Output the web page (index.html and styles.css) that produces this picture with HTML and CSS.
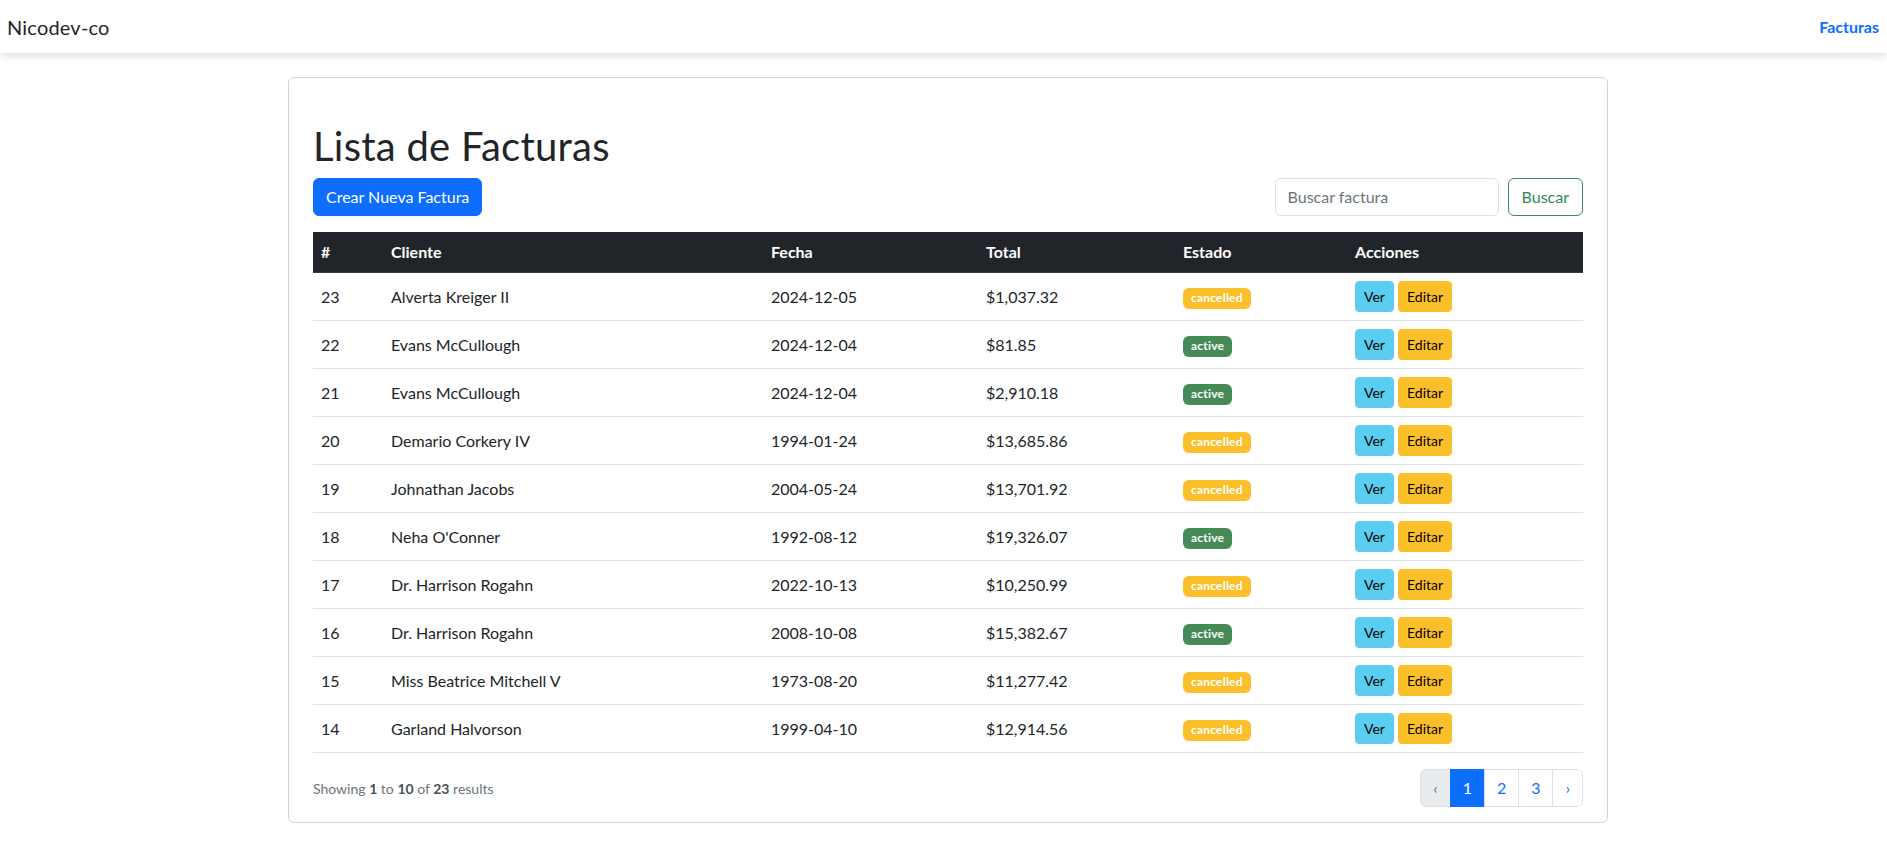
FILE: index.html
```html
<!DOCTYPE html>
<html lang="es">
<head>
<meta charset="utf-8">
<title>Lista de Facturas</title>
<link rel="stylesheet" href="styles.css">
</head>
<body>
<nav class="navbar">
  <a class="brand" href="#">Nicodev-co</a>
  <a class="nav-link" href="#">Facturas</a>
</nav>
<main class="wrap">
  <section class="card">
    <h1 class="title">Lista de Facturas</h1>
    <div class="toolbar">
      <a class="btn btn-primary" href="#">Crear Nueva Factura</a>
      <form class="search">
        <input class="search-input" type="text" placeholder="Buscar factura">
        <button class="btn btn-outline-success" type="button">Buscar</button>
      </form>
    </div>
    <table class="table">
      <colgroup>
        <col class="c-id"><col class="c-cli"><col class="c-fec"><col class="c-tot"><col class="c-est"><col class="c-acc">
      </colgroup>
      <thead>
        <tr><th>#</th><th>Cliente</th><th>Fecha</th><th>Total</th><th>Estado</th><th>Acciones</th></tr>
      </thead>
      <tbody>
        <tr><td>23</td><td>Alverta Kreiger II</td><td>2024-12-05</td><td>$1,037.32</td><td><span class="badge badge-warn">cancelled</span></td><td><a class="btn-sm btn-info" href="#">Ver</a> <a class="btn-sm btn-warning" href="#">Editar</a></td></tr>
        <tr><td>22</td><td>Evans McCullough</td><td>2024-12-04</td><td>$81.85</td><td><span class="badge badge-ok">active</span></td><td><a class="btn-sm btn-info" href="#">Ver</a> <a class="btn-sm btn-warning" href="#">Editar</a></td></tr>
        <tr><td>21</td><td>Evans McCullough</td><td>2024-12-04</td><td>$2,910.18</td><td><span class="badge badge-ok">active</span></td><td><a class="btn-sm btn-info" href="#">Ver</a> <a class="btn-sm btn-warning" href="#">Editar</a></td></tr>
        <tr><td>20</td><td>Demario Corkery IV</td><td>1994-01-24</td><td>$13,685.86</td><td><span class="badge badge-warn">cancelled</span></td><td><a class="btn-sm btn-info" href="#">Ver</a> <a class="btn-sm btn-warning" href="#">Editar</a></td></tr>
        <tr><td>19</td><td>Johnathan Jacobs</td><td>2004-05-24</td><td>$13,701.92</td><td><span class="badge badge-warn">cancelled</span></td><td><a class="btn-sm btn-info" href="#">Ver</a> <a class="btn-sm btn-warning" href="#">Editar</a></td></tr>
        <tr><td>18</td><td>Neha O'Conner</td><td>1992-08-12</td><td>$19,326.07</td><td><span class="badge badge-ok">active</span></td><td><a class="btn-sm btn-info" href="#">Ver</a> <a class="btn-sm btn-warning" href="#">Editar</a></td></tr>
        <tr><td>17</td><td>Dr. Harrison Rogahn</td><td>2022-10-13</td><td>$10,250.99</td><td><span class="badge badge-warn">cancelled</span></td><td><a class="btn-sm btn-info" href="#">Ver</a> <a class="btn-sm btn-warning" href="#">Editar</a></td></tr>
        <tr><td>16</td><td>Dr. Harrison Rogahn</td><td>2008-10-08</td><td>$15,382.67</td><td><span class="badge badge-ok">active</span></td><td><a class="btn-sm btn-info" href="#">Ver</a> <a class="btn-sm btn-warning" href="#">Editar</a></td></tr>
        <tr><td>15</td><td>Miss Beatrice Mitchell V</td><td>1973-08-20</td><td>$11,277.42</td><td><span class="badge badge-warn">cancelled</span></td><td><a class="btn-sm btn-info" href="#">Ver</a> <a class="btn-sm btn-warning" href="#">Editar</a></td></tr>
        <tr><td>14</td><td>Garland Halvorson</td><td>1999-04-10</td><td>$12,914.56</td><td><span class="badge badge-warn">cancelled</span></td><td><a class="btn-sm btn-info" href="#">Ver</a> <a class="btn-sm btn-warning" href="#">Editar</a></td></tr>
      </tbody>
    </table>
    <div class="pager">
      <p class="pager-info">Showing <b>1</b> to <b>10</b> of <b>23</b> results</p>
      <ul class="pagination">
        <li class="page disabled">&lsaquo;</li>
        <li class="page active">1</li>
        <li class="page">2</li>
        <li class="page">3</li>
        <li class="page">&rsaquo;</li>
      </ul>
    </div>
  </section>
</main>
</body>
</html>
```
FILE: styles.css
```css
* { box-sizing: border-box; }
html, body { margin: 0; padding: 0; }
body {
  font-family: Lato, "Noto Sans", "Liberation Sans", sans-serif;
  font-size: 16px;
  line-height: 1.5;
  color: #212529;
  background: #fff;
}
a { text-decoration: none; }

.navbar {
  height: 53px;
  display: flex;
  align-items: center;
  justify-content: space-between;
  padding: 0 8px 0 7px;
  background: #fff;
  box-shadow: 0 2px 8px rgba(0, 0, 0, 0.14);
  position: relative;
}
.brand { font-size: 20px; color: #212529; letter-spacing: 0.2px; }
.nav-link { font-size: 16px; font-weight: 700; color: #0d6efd; }

.wrap {
  display: flex;
  justify-content: center;
  padding: 24px 0 0 9px;
}
.card {
  width: 1320px;
  border: 1px solid #d5d5d5;
  border-radius: 6px;
  padding: 44px 24px 15px 24px;
}
.title {
  margin: 0 0 8px 0;
  font-size: 40px;
  font-weight: 400;
  line-height: 1.2;
  letter-spacing: 0.25px;
}
.toolbar {
  display: flex;
  justify-content: space-between;
  align-items: center;
  margin-bottom: 16px;
}
.btn {
  display: inline-block;
  font-family: inherit;
  font-size: 16px;
  line-height: 24px;
  padding: 6px 12px;
  border: 1px solid transparent;
  border-radius: 6px;
  cursor: pointer;
}
.btn-primary { background: #0d6efd; color: #fff; border-color: #0d6efd; }
.btn-outline-success { background: #fff; color: #2f8a55; border-color: #3a8c5a; padding: 6px 13px; }
.search { display: flex; gap: 9px; }
.search-input {
  width: 224px;
  font-family: inherit;
  font-size: 16px;
  line-height: 24px;
  padding: 6px 12px;
  border: 1px solid #dee2e6;
  border-radius: 6px;
  color: #212529;
}
.search-input::placeholder { color: #6c757d; }

.table {
  width: 100%;
  border-collapse: collapse;
  table-layout: fixed;
  margin-bottom: 16px;
}
.c-id { width: 70px; }
.c-cli { width: 380px; }
.c-fec { width: 215px; }
.c-tot { width: 197px; }
.c-est { width: 172px; }
.c-acc { width: 236px; }
.table th {
  background: #212529;
  color: #fff;
  text-align: left;
  font-weight: 700;
  padding: 8px;
  border-bottom: 1px solid #373b3e;
}
.table td {
  padding: 8px;
  vertical-align: middle;
  border-bottom: 1px solid #dee2e6;
  height: 48px;
}
.badge {
  display: inline-block;
  font-size: 12px;
  font-weight: 700;
  line-height: 1;
  color: #fff;
  padding: 4px 8px 5px;
  border-radius: 6px;
  letter-spacing: 0.2px;
}
.badge-warn { background: #fbbf2a; }
.badge-ok { background: #468a58; }
.btn-sm {
  display: inline-block;
  font-size: 14px;
  line-height: 21px;
  padding: 4px 8px;
  border: 1px solid transparent;
  border-radius: 4px;
  color: #000;
}
.btn-info { background: #5acdf1; border-color: #5acdf1; }
.btn-warning { background: #fbbf2a; border-color: #fbbf2a; }

.pager {
  display: flex;
  justify-content: space-between;
  align-items: center;
}
.pager-info {
  margin: 0;
  font-size: 14px;
  color: #6c757d;
}
.pager-info b { color: #495057; font-weight: 700; }
.pagination {
  display: flex;
  list-style: none;
  margin: 0;
  padding: 0;
}
.page {
  padding: 6px 12px;
  line-height: 24px;
  font-size: 16px;
  color: #0d6efd;
  background: #fff;
  border: 1px solid #dee2e6;
  margin-left: -1px;
}
.page:first-child { border-radius: 6px 0 0 6px; margin-left: 0; }
.page:last-child { border-radius: 0 6px 6px 0; }
.page.disabled { background: #e9ecef; color: #6c757d; }
.page.active { background: #0d6efd; border-color: #0d6efd; color: #fff; }
```
